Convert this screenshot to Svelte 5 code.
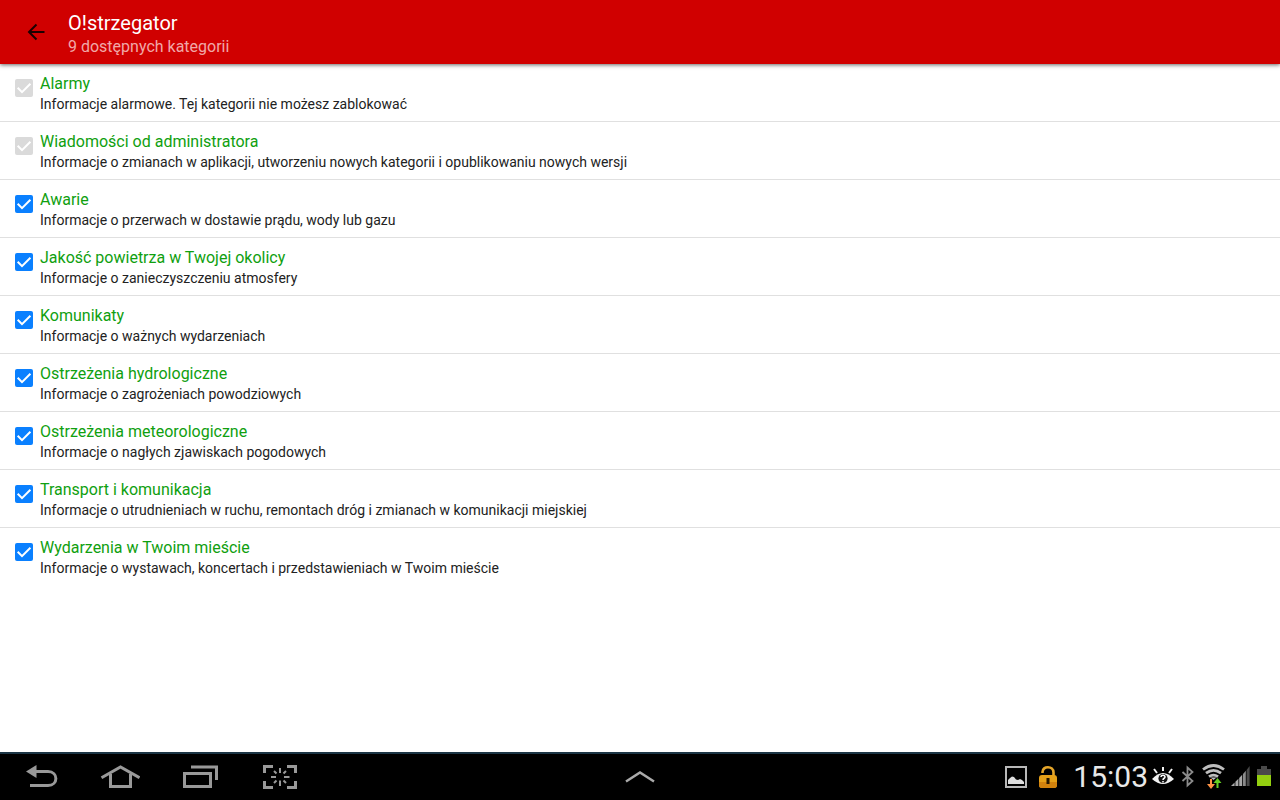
<script>
  let categories = $state([
    { id: 'alarmy', name: 'Alarmy', info: 'Informacje alarmowe. Tej kategorii nie możesz zablokować', checked: true, locked: true },
    { id: 'wiadomosci', name: 'Wiadomości od administratora', info: 'Informacje o zmianach w aplikacji, utworzeniu nowych kategorii i opublikowaniu nowych wersji', checked: true, locked: true },
    { id: 'awarie', name: 'Awarie', info: 'Informacje o przerwach w dostawie prądu, wody lub gazu', checked: true, locked: false },
    { id: 'powietrze', name: 'Jakość powietrza w Twojej okolicy', info: 'Informacje o zanieczyszczeniu atmosfery', checked: true, locked: false },
    { id: 'komunikaty', name: 'Komunikaty', info: 'Informacje o ważnych wydarzeniach', checked: true, locked: false },
    { id: 'hydro', name: 'Ostrzeżenia hydrologiczne', info: 'Informacje o zagrożeniach powodziowych', checked: true, locked: false },
    { id: 'meteo', name: 'Ostrzeżenia meteorologiczne', info: 'Informacje o nagłych zjawiskach pogodowych', checked: true, locked: false },
    { id: 'transport', name: 'Transport i komunikacja', info: 'Informacje o utrudnieniach w ruchu, remontach dróg i zmianach w komunikacji miejskiej', checked: true, locked: false },
    { id: 'wydarzenia', name: 'Wydarzenia w Twoim mieście', info: 'Informacje o wystawach, koncertach i przedstawieniach w Twoim mieście', checked: true, locked: false }
  ]);
</script>

<div class="screen">
  <header class="appbar">
    <button class="up" type="button">
      <svg width="24" height="24" viewBox="0 0 24 24" fill="none" stroke="#1c0000" stroke-width="2">
        <path d="M20.500 12H6M12.500 4.500L5 12L12.500 19.500" />
      </svg>
    </button>
    <div class="heading">
      <h1>O!strzegator</h1>
      <p>{categories.length} dostępnych kategorii</p>
    </div>
  </header>

  <main>
    <ul>
      {#each categories as category (category.id)}
        <li>
          <label class="row" for={category.id}>
            <span class="box">
              <input id={category.id} type="checkbox" bind:checked={category.checked} disabled={category.locked} />
              <svg width="18" height="18" viewBox="0 0 18 18" fill="none" stroke="#fff" stroke-width="2">
                <path d="M2.700 8.800L7 13.100L15.400 4.700" />
              </svg>
            </span>
            <span class="text">
              <span class="name">{category.name}</span>
              <span class="info">{category.info}</span>
            </span>
          </label>
        </li>
      {/each}
    </ul>
  </main>

  <footer class="navbar">
    <nav>
      <button type="button">
        <svg width="36" height="24" viewBox="0 0 36 24">
          <path d="M4 6.500L14.500 0V13Z" fill="#999" />
          <path d="M13 6.500H26C36.500 6.500 36.500 20.500 26 20.500H8" fill="none" stroke="#999" stroke-width="3" />
        </svg>
      </button>
      <button type="button">
        <svg width="40" height="24" viewBox="0 0 40 24" fill="none" stroke="#999" stroke-width="3">
          <path d="M1.500 12.800L20.500 2L39.500 12.800" />
          <path d="M10.500 9V21.500H30.500V9" />
        </svg>
      </button>
      <button type="button">
        <svg width="36" height="24" viewBox="0 0 36 24" fill="none" stroke="#999" stroke-width="3">
          <path d="M2.500 8.500H28.500V21.500H2.500Z" />
          <path d="M9 2H34.500V15" />
        </svg>
      </button>
      <button type="button">
        <svg width="34" height="24" viewBox="0 0 34 24" fill="none" stroke="#999" stroke-width="3">
          <path d="M10 1.500H1.500V8M24 1.500H32.500V8M1.500 16V22.500H10M32.500 16V22.500H24" />
          <path d="M17 3V8M17 15.500V21M8 12H13M21 12H26.500M11 6L13.500 8.500M23 6L20.500 8.500M11 18L13.500 15.500M23 18L20.500 15.500" stroke-width="2" />
        </svg>
      </button>
    </nav>

    <button class="expand" type="button">
      <svg width="32" height="16" viewBox="0 0 32 16" fill="none" stroke="#aaa" stroke-width="2.500">
        <path d="M2 12.500L16 3.500L30 12.500" />
      </svg>
    </button>

    <div class="status">
      <div class="notices">
        <svg width="22" height="22" viewBox="0 0 22 22">
          <rect x="1" y="1" width="20" height="20" fill="none" stroke="#b8b8b8" stroke-width="2" />
          <path d="M3 18V14L5 12L7 10.500L9 11L11 13.500L13 14L15 13L17 14L19 16V18Z" fill="#dedede" />
        </svg>
        <svg width="20" height="24" viewBox="0 0 20 24">
          <path d="M4.500 8V7C4.500 .5 15.500 .5 15.500 7.500V12" fill="none" stroke="#e4a52a" stroke-width="2.600" />
          <rect x="1" y="10" width="18" height="13" rx="3" fill="#e5a018" />
          <path d="M1 17H19V20Q19 23 16 23H4Q1 23 1 20Z" fill="#d2820d" />
          <path d="M8.500 13H11.500V19H8.500Z" fill="#251600" />
        </svg>
      </div>
      <time>15:03</time>
      <div class="system">
        <svg width="24" height="24" viewBox="0 0 24 24">
          <path d="M1 14Q12 2 23 14Q12 24 1 14Z" fill="#f2f2f2" />
          <circle cx="12" cy="13.500" r="4.600" fill="#111" />
          <path d="M12 6V2M6 8L3 4M18 8L21 4" stroke="#f2f2f2" stroke-width="2" fill="none" />
          <path d="M10 12C10 9.500 14 9.500 14 12C14 13.500 12 13 12 15M12 16V17.500" stroke="#fff" stroke-width="1.500" fill="none" />
        </svg>
        <svg width="14" height="24" viewBox="0 0 14 24" fill="none" stroke="#8c8c8c" stroke-width="1.800">
          <path d="M1.500 7L11.500 16L6.500 20.500V2.500L11.500 7L1.500 16" />
        </svg>
        <svg width="24" height="26" viewBox="0 0 24 26">
          <g fill="none" stroke="#bdbdbd" stroke-width="2.800">
            <path d="M2 5.500Q12.500 -2.500 23 5.500" />
            <path d="M5 9.200Q12.500 3.500 20 9.200" />
            <path d="M8 12.700Q12.500 9.500 17 12.700" />
          </g>
          <path d="M9.500 13.500H15.500L12.500 16Z" fill="#bdbdbd" />
          <path d="M9 15H11V20H14L10 25L6 20H9Z" fill="#ff9345" />
          <path d="M15.500 24H17.500V19H20.500L16.500 14L12.500 19H15.500Z" fill="#65cf22" />
        </svg>
        <svg width="20" height="22" viewBox="0 0 20 22">
          <path d="M0 20L3.600 16.500V20ZM4.400 15.700L7.400 12.700V20H4.400ZM8.200 11.900L11.200 8.700V20H8.200Z" fill="#a8a8a8" />
          <path d="M12 7.900L14.800 4.800V20H12Z" fill="#8a8a8a" />
          <path d="M15.600 4L18.600 0V20H15.600Z" fill="#484848" />
        </svg>
        <svg width="14" height="22" viewBox="0 0 14 22">
          <path d="M4 0H10V3H14V9H0V3H4Z" fill="#4a4a4a" />
          <path d="M0 9H14V20H0Z" fill="#93cf10" />
        </svg>
      </div>
    </div>
  </footer>
</div>

<style>
  :global(body) {
    margin: 0;
    background: #fff;
  }

  .screen {
    display: flex;
    flex-direction: column;
    min-height: 100vh;
    font-family: Roboto, "Noto Sans", sans-serif;
    color: #222;
  }

  button {
    display: flex;
    align-items: center;
    justify-content: center;
    margin: 0;
    padding: 0;
    border: 0;
    background: none;
    cursor: pointer;
  }

  svg {
    display: block;
    flex: none;
  }

  .appbar {
    display: flex;
    align-items: center;
    gap: 8px;
    height: 64px;
    padding: 0 12px;
    background: #d00000;
    box-shadow: 0 1px 4px rgba(0, 0, 0, 0.6);
  }

  .up {
    width: 48px;
    height: 48px;
  }

  .heading {
    padding-top: 5px;
  }

  h1,
  p {
    margin: 0;
    font-weight: 400;
  }

  h1 {
    color: #fff;
    font-size: 20px;
    line-height: 24px;
  }

  .heading p {
    color: #f0a8a8;
    font-size: 16px;
    line-height: 24px;
  }

  main {
    flex: 1;
  }

  ul {
    margin: 0;
    padding: 0;
    list-style: none;
  }

  li + li {
    border-top: 1px solid #e0e0e0;
  }

  .row {
    display: flex;
    gap: 7px;
    padding: 10px 15px 7px;
  }

  .box {
    display: grid;
    flex: none;
    align-self: flex-start;
    width: 18px;
    height: 18px;
    margin-top: 5px;
  }

  .box input,
  .box svg {
    grid-area: 1 / 1;
  }

  .box svg {
    pointer-events: none;
  }

  .box input:not(:checked) + svg {
    visibility: hidden;
  }

  input {
    appearance: none;
    width: 18px;
    height: 18px;
    margin: 0;
    border-radius: 2px;
    background: #0a80ff;
  }

  input:disabled {
    background: #dadada;
  }

  input:not(:checked) {
    border: 2px solid #757575;
    background: #fff;
  }

  .text {
    display: flex;
    flex-direction: column;
  }

  .name {
    color: #10a010;
    font-size: 16px;
    line-height: 20px;
  }

  .info {
    font-size: 14px;
    line-height: 20px;
  }

  .navbar {
    display: grid;
    grid-template-columns: 1fr auto 1fr;
    align-items: center;
    height: 46px;
    border-top: 2px solid #1b3545;
    background: #000;
  }

  nav {
    display: flex;
  }

  nav button {
    width: 80px;
    height: 46px;
  }

  .expand {
    width: 80px;
    height: 46px;
  }

  .status,
  .notices,
  .system {
    display: flex;
    align-items: center;
  }

  .status {
    justify-content: flex-end;
    padding-right: 9px;
  }

  .notices {
    gap: 11px;
    margin-right: 15px;
  }

  time {
    color: #e8e8e8;
    font-size: 30px;
    line-height: 40px;
  }

  .system {
    gap: 6px;
    margin-left: 3px;
  }
</style>
